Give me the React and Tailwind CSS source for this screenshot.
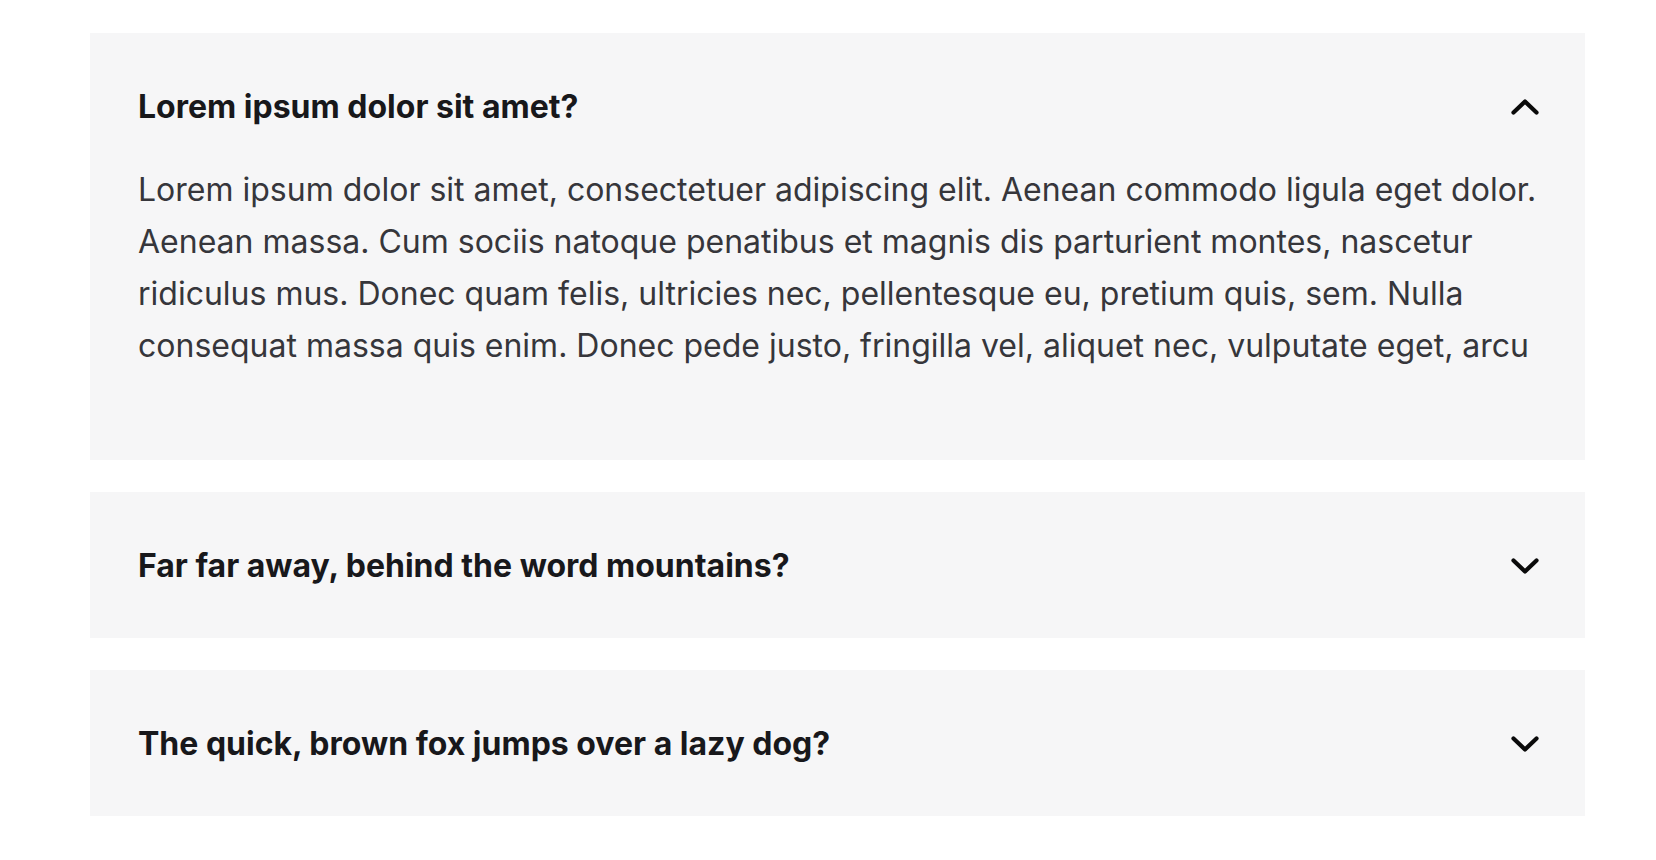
const items = [
  {
    q: "Lorem ipsum dolor sit amet?",
    a: "Lorem ipsum dolor sit amet, consectetuer adipiscing elit. Aenean commodo ligula eget dolor. Aenean massa. Cum sociis natoque penatibus et magnis dis parturient montes, nascetur ridiculus mus. Donec quam felis, ultricies nec, pellentesque eu, pretium quis, sem. Nulla consequat massa quis enim. Donec pede justo, fringilla vel, aliquet nec, vulputate eget, arcu",
    open: true,
  },
  { q: "Far far away, behind the word mountains?" },
  { q: "The quick, brown fox jumps over a lazy dog?" },
]

function Chevron({ up }) {
  return (
    <svg width="28" height="16" viewBox="0 0 28 16" fill="none" className="mr-[-2px] shrink-0">
      <polyline
        points={up ? "2.5,13.5 14,2.5 25.5,13.5" : "2.5,2.5 14,13.5 25.5,2.5"}
        stroke="#0a0a0a"
        strokeWidth="4.2"
        strokeLinecap="round"
        strokeLinejoin="round"
      />
    </svg>
  )
}

export default function App() {
  return (
    <div className="min-h-[860px] bg-white pt-[33px] font-['Inter',sans-serif]">
      <div className="ml-[90px] flex w-[1495px] flex-col gap-8">
        {items.map((it) => (
          <div key={it.q} className={`bg-[#f6f6f7] px-12 pt-[49px] ${it.open ? "pb-[88px]" : "pb-[47px]"}`}>
            <div className="flex items-center justify-between">
              <h3 className="text-[32px] font-bold leading-[50px] text-[#18181b]">{it.q}</h3>
              <Chevron up={it.open} />
            </div>
            {it.open && (
              <p className="mt-8 mr-[-8px] text-[32px] leading-[52px] text-[#36363b]">{it.a}</p>
            )}
          </div>
        ))}
      </div>
    </div>
  )
}
